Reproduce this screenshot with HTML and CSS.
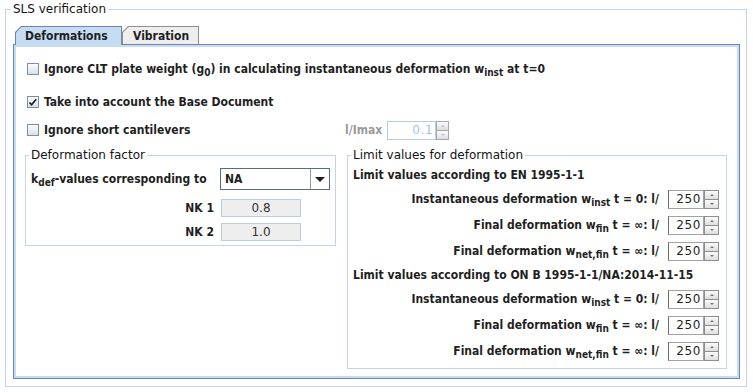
FILE: index.html
```html
<!DOCTYPE html>
<html lang="en">
<head>
    <meta charset="UTF-8">
    <title>SLS verification</title>
    <link rel="stylesheet" href="styles.css">
</head>
<body>
    <fieldset class="group sls">
        <legend>SLS verification</legend>

        <!-- Tab strip -->
        <div class="tabs">
            <div class="tab active"><div class="tab-inner">Deformations</div></div>
            <div class="tab"><div class="tab-inner">Vibration</div></div>
        </div>

        <div class="panel">
            <div class="check-row first">
                <span class="cb"></span>
                <span>Ignore CLT plate weight (g<sub>0</sub>) in calculating instantaneous deformation w<sub>inst</sub> at t=0</span>
            </div>
            <div class="check-row second">
                <span class="cb checked">
                    <svg width="10" height="10" viewBox="0 0 10 10"><path d="M1.5 5.5 L3.6 7.8 L8.2 2.2" fill="none" stroke="#1d1d1d" stroke-width="1.7"/></svg>
                </span>
                <span>Take into account the Base Document</span>
            </div>

            <div class="split">
                <div class="check-row">
                    <span class="cb"></span>
                    <span>Ignore short cantilevers</span>
                </div>
                <div class="lmax">
                    <span class="lmax-label">l/Imax</span>
                    <span class="spinner disabled">
                        <span class="spin-field">0.1</span>
                        <span class="spin-btns"><span class="spin-up"></span><span class="spin-down"></span></span>
                    </span>
                </div>
            </div>

            <div class="split columns">
                <!-- Deformation factor -->
                <fieldset class="group factor">
                    <legend>Deformation factor</legend>
                    <div class="factor-grid">
                        <span class="kdef">k<sub>def</sub>-values corresponding to</span>
                        <div class="combo">
                            <span class="combo-value">NA</span>
                            <span class="combo-arrow"></span>
                        </div>
                        <span class="nk-label">NK 1</span>
                        <span class="nk-field">0.8</span>
                        <span class="nk-label">NK 2</span>
                        <span class="nk-field">1.0</span>
                    </div>
                </fieldset>

                <!-- Limit values -->
                <fieldset class="group limits">
                    <legend>Limit values for deformation</legend>
                    <div class="limit-head">Limit values according to EN 1995-1-1</div>
                    <div class="limit-row">
                        <span>Instantaneous deformation w<sub>inst</sub> t = 0: l/</span>
                        <span class="spinner"><span class="spin-field">250</span><span class="spin-btns"><span class="spin-up"></span><span class="spin-down"></span></span></span>
                    </div>
                    <div class="limit-row">
                        <span>Final deformation w<sub>fin</sub> t = ∞: l/</span>
                        <span class="spinner"><span class="spin-field">250</span><span class="spin-btns"><span class="spin-up"></span><span class="spin-down"></span></span></span>
                    </div>
                    <div class="limit-row">
                        <span>Final deformation w<sub>net,fin</sub> t = ∞: l/</span>
                        <span class="spinner"><span class="spin-field">250</span><span class="spin-btns"><span class="spin-up"></span><span class="spin-down"></span></span></span>
                    </div>
                    <div class="limit-head">Limit values according to ON B 1995-1-1/NA:2014-11-15</div>
                    <div class="limit-row">
                        <span>Instantaneous deformation w<sub>inst</sub> t = 0: l/</span>
                        <span class="spinner"><span class="spin-field">250</span><span class="spin-btns"><span class="spin-up"></span><span class="spin-down"></span></span></span>
                    </div>
                    <div class="limit-row">
                        <span>Final deformation w<sub>fin</sub> t = ∞: l/</span>
                        <span class="spinner"><span class="spin-field">250</span><span class="spin-btns"><span class="spin-up"></span><span class="spin-down"></span></span></span>
                    </div>
                    <div class="limit-row">
                        <span>Final deformation w<sub>net,fin</sub> t = ∞: l/</span>
                        <span class="spinner"><span class="spin-field">250</span><span class="spin-btns"><span class="spin-up"></span><span class="spin-down"></span></span></span>
                    </div>
                </fieldset>
            </div>
        </div>
    </fieldset>
</body>
</html>
```

FILE: styles.css
```css
/* General */
* {
    box-sizing: border-box;
}
body {
    margin: 0;
    padding: 2px 0 0 5px;
    background: #ffffff;
    color: #1f1f1f;
    font-family: "DejaVu Sans", sans-serif;
    font-size: 12px;
}
sub {
    font-size: 10px;
    line-height: 0;
    vertical-align: -3px;
}

/* Titled groups */
fieldset.group {
    margin: 0;
    min-width: 0;
    border: 1px solid #c3d5e9;
}
fieldset.group legend {
    margin-left: -2px;
    padding: 0 2px;
    font-size: 12px;
    line-height: 15px;
    color: #141414;
}
.sls {
    width: 742px;
    height: 385px;
    padding: 9px 6px 6px 7px;
}
.sls > legend {
    margin-left: -4px;
}

/* Bold control text */
.tab,
.check-row,
.lmax-label,
.kdef,
.combo-value,
.nk-label,
.limit-head,
.limit-row {
    font-family: "DejaVu Sans Condensed", "DejaVu Sans", sans-serif;
    font-stretch: condensed;
    font-weight: bold;
    font-size: 12px;
}

/* Tabs */
.tabs {
    display: flex;
    padding-left: 2px;
    height: 18px;
    position: relative;
    z-index: 1;
}
.tab {
    height: 18px;
    padding: 1px 1px 0 1px;
    background: #8f8f8f;
    clip-path: polygon(0 6px, 6px 0, 100% 0, 100% 100%, 0 100%);
    width: 77px;
}
.tab.active {
    width: 107px;
    height: 19px;
    background: #6e85ad;
}
.tab-inner {
    height: 100%;
    padding-left: 9px;
    line-height: 18px;
    background: #eeeeee;
    clip-path: polygon(0 5.5px, 5.5px 0, 100% 0, 100% 100%, 0 100%);
}
.tab:not(.active) .tab-inner {
    padding-left: 10px;
}
.tab.active .tab-inner {
    background: #c6dcf3;
}

/* Tab panel */
.panel {
    height: 335px;
    border: 1px solid #6e85ad;
    box-shadow: inset 0 0 0 2px #c6dcf3;
    padding: 14px 12px 8px 11px;
}

/* Check boxes */
.check-row {
    display: flex;
    align-items: center;
    height: 20px;
    padding-left: 2px;
    white-space: nowrap;
}
.check-row.first {
    margin-bottom: 13px;
}
.check-row.second {
    margin-bottom: 8px;
}
.cb {
    width: 12px;
    height: 12px;
    margin-right: 5px;
    border: 1px solid #7d8da7;
    background: linear-gradient(#fdfdfd, #d6e0ec);
    display: flex;
    align-items: center;
    justify-content: center;
}

/* Two column rows */
.split {
    display: grid;
    grid-template-columns: 311px 380px;
    column-gap: 11px;
}
.columns {
    margin-top: 8px;
    align-items: start;
}
.lmax {
    display: flex;
    align-items: center;
    margin-left: -2px;
}
.lmax-label {
    color: #9a9a9a;
    margin-right: 5px;
}

/* Spinners */
.spinner {
    display: inline-flex;
    height: 19px;
}
.spin-field {
    width: 36px;
    height: 19px;
    padding-right: 2px;
    border: 1px solid #a2a2a2;
    border-left-color: #6c6c6c;
    background: #ffffff;
    text-align: right;
    line-height: 17px;
    font-weight: normal;
    font-family: "DejaVu Sans", sans-serif;
    font-stretch: normal;
    letter-spacing: 0.6px;
    color: #1f1f1f;
}
.spin-btns {
    display: flex;
    flex-direction: column;
    width: 15px;
}
.spin-up,
.spin-down {
    flex: 1;
    border: 1px solid #8e8e8e;
    background: linear-gradient(#fbfbfb, #dedede);
    display: flex;
    align-items: center;
    justify-content: center;
}
.spin-down {
    border-top: none;
}
.spin-up::after,
.spin-down::after {
    content: "";
    border-left: 2px solid transparent;
    border-right: 2px solid transparent;
}
.spin-up::after {
    border-bottom: 2px solid #777;
}
.spin-down::after {
    border-top: 2px solid #777;
}
.spinner.disabled .spin-field {
    width: 49px;
    border-color: #b7cde5;
    color: #a9c0d9;
    background: #ffffff;
}
.spinner.disabled .spin-btns {
    width: 13px;
}
.spinner.disabled .spin-up,
.spinner.disabled .spin-down {
    border-color: #a8a8a8;
}
.spinner.disabled .spin-up::after {
    border-bottom-color: #b4c6da;
}
.spinner.disabled .spin-down::after {
    border-top-color: #b4c6da;
}

/* Deformation factor */
.factor {
    padding: 5px 4px 4px 5px;
}
.factor-grid {
    display: grid;
    grid-template-columns: 183px 110px;
    column-gap: 6px;
    row-gap: 6px;
    align-items: center;
}
.kdef {
    white-space: nowrap;
    margin-bottom: 3px;
}
.combo {
    display: flex;
    height: 22px;
    border: 1px solid #556a8e;
    background: #ffffff;
    margin-bottom: 3px;
}
.combo-value {
    flex: 1;
    padding-left: 4px;
    line-height: 20px;
}
.combo-arrow {
    width: 19px;
    border-left: 1px solid #8a9ab5;
    display: flex;
    align-items: center;
    justify-content: center;
}
.combo-arrow::after {
    content: "";
    border-left: 5px solid transparent;
    border-right: 5px solid transparent;
    border-top: 5px solid #1f1f1f;
}
.nk-label {
    text-align: right;
}
.nk-field {
    width: 80px;
    height: 18px;
    margin-left: 1px;
    border: 1px solid #b7cde5;
    background: #eeeeee;
    text-align: center;
    line-height: 16px;
    color: #333;
}

/* Limit values */
.limits {
    padding: 2px 7px 7px 5px;
}
.limit-head {
    height: 20px;
    line-height: 20px;
    white-space: nowrap;
}
.limit-row {
    display: flex;
    justify-content: flex-end;
    align-items: center;
    height: 20px;
    margin-top: 6px;
    white-space: nowrap;
}
.limit-head + .limit-row {
    margin-top: 4px;
}
.limit-row + .limit-head {
    margin-top: 4px;
}
.limit-row .spinner {
    margin-left: 9px;
}
```
